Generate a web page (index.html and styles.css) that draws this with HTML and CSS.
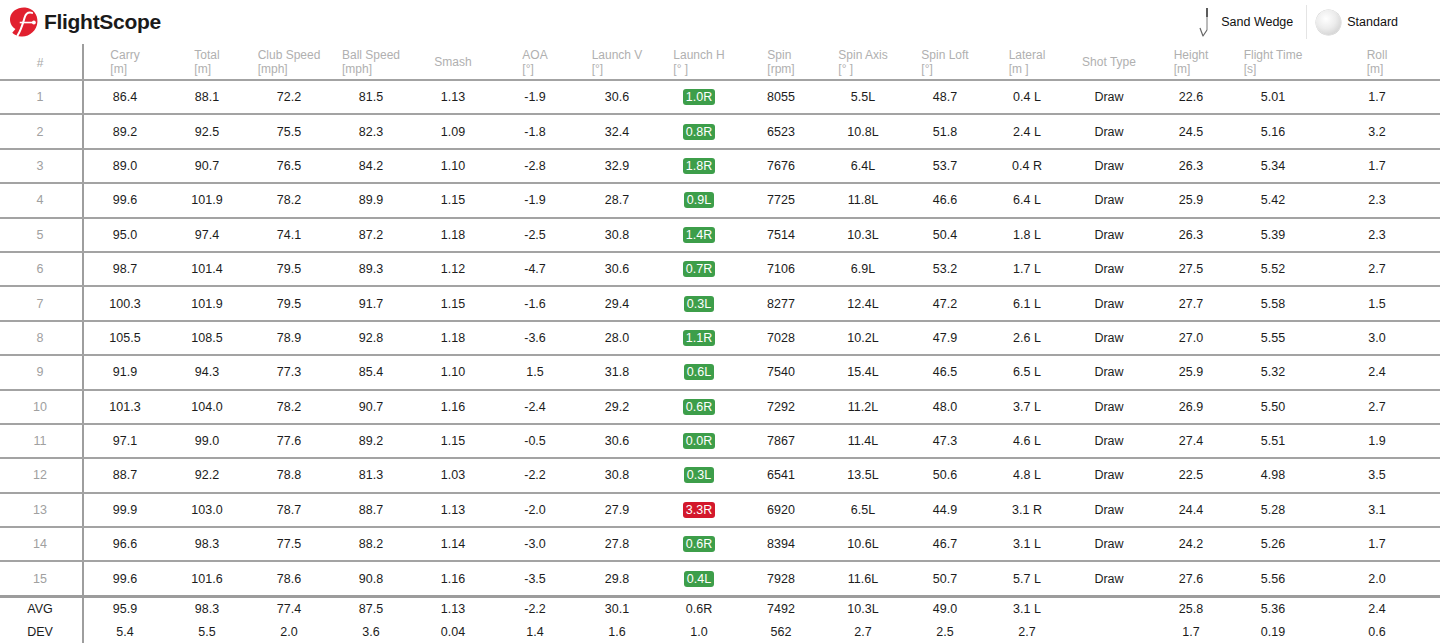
FILE: index.html
```html
<!DOCTYPE html>
<html lang="en">
<head>
<meta charset="utf-8">
<title>FlightScope</title>
<link rel="stylesheet" href="styles.css">
</head>
<body>
<header class="topbar">
  <div class="brand">
    <svg class="logo" viewBox="2 1 27 28" width="29" height="30">
      <path d="M3 11 C4 5 10 1 17 1.5 C24 2 29 8 28.5 15 C28 23 21 29 13.5 28.5 C10 28.3 7 27 5 25 L8 21.5 C4 19 2.5 15 3 11 Z" fill="#e1202f"/>
      <path d="M10 27.5 C13.5 22 15 16 16.5 11 C17.7 7 20 5.5 23.5 6.5" fill="none" stroke="#fff" stroke-width="1.9" stroke-linecap="round"/>
      <path d="M12 15.5 L25 15.5" fill="none" stroke="#fff" stroke-width="1.5"/>
      <circle cx="25.2" cy="15.5" r="1.8" fill="#fff"/>
    </svg>
    <span class="brand-name">FlightScope</span>
  </div>
  <div class="settings">
    <div class="setting">
      <svg class="club" viewBox="0 0 14 30" width="14" height="30">
        <path d="M8 1 L8 10" stroke="#333" stroke-width="1.6" fill="none"/>
        <path d="M8 10 L8 23" stroke="#777" stroke-width="1" fill="none"/>
        <path d="M1 21 L4 29 L8 23" stroke="#666" stroke-width="1.2" fill="none" stroke-linejoin="round"/>
      </svg>
      <span>Sand Wedge</span>
    </div>
    <div class="divider"></div>
    <div class="setting">
      <span class="ball"></span>
      <span>Standard</span>
    </div>
  </div>
</header>

<main class="grid-table">
  <div class="row head">
    <div class="idx">#</div>
    <div class="hc"><span>Carry<br>[m]</span></div>
    <div class="hc"><span>Total<br>[m]</span></div>
    <div class="hc"><span>Club Speed<br>[mph]</span></div>
    <div class="hc"><span>Ball Speed<br>[mph]</span></div>
    <div class="hc"><span>Smash</span></div>
    <div class="hc"><span>AOA<br>[°]</span></div>
    <div class="hc"><span>Launch V<br>[°]</span></div>
    <div class="hc"><span>Launch H<br>[° ]</span></div>
    <div class="hc"><span>Spin<br>[rpm]</span></div>
    <div class="hc"><span>Spin Axis<br>[° ]</span></div>
    <div class="hc"><span>Spin Loft<br>[°]</span></div>
    <div class="hc"><span>Lateral<br>[m ]</span></div>
    <div class="hc"><span>Shot Type</span></div>
    <div class="hc"><span>Height<br>[m]</span></div>
    <div class="hc"><span>Flight Time<br>[s]</span></div>
    <div class="hc"><span>Roll<br>[m]</span></div>
  </div>

  <div class="row shot"><div class="idx">1</div><div>86.4</div><div>88.1</div><div>72.2</div><div>81.5</div><div>1.13</div><div>-1.9</div><div>30.6</div><div><span class="badge ok">1.0R</span></div><div>8055</div><div>5.5L</div><div>48.7</div><div>0.4 L</div><div>Draw</div><div>22.6</div><div>5.01</div><div>1.7</div></div>
  <div class="row shot"><div class="idx">2</div><div>89.2</div><div>92.5</div><div>75.5</div><div>82.3</div><div>1.09</div><div>-1.8</div><div>32.4</div><div><span class="badge ok">0.8R</span></div><div>6523</div><div>10.8L</div><div>51.8</div><div>2.4 L</div><div>Draw</div><div>24.5</div><div>5.16</div><div>3.2</div></div>
  <div class="row shot"><div class="idx">3</div><div>89.0</div><div>90.7</div><div>76.5</div><div>84.2</div><div>1.10</div><div>-2.8</div><div>32.9</div><div><span class="badge ok">1.8R</span></div><div>7676</div><div>6.4L</div><div>53.7</div><div>0.4 R</div><div>Draw</div><div>26.3</div><div>5.34</div><div>1.7</div></div>
  <div class="row shot"><div class="idx">4</div><div>99.6</div><div>101.9</div><div>78.2</div><div>89.9</div><div>1.15</div><div>-1.9</div><div>28.7</div><div><span class="badge ok">0.9L</span></div><div>7725</div><div>11.8L</div><div>46.6</div><div>6.4 L</div><div>Draw</div><div>25.9</div><div>5.42</div><div>2.3</div></div>
  <div class="row shot"><div class="idx">5</div><div>95.0</div><div>97.4</div><div>74.1</div><div>87.2</div><div>1.18</div><div>-2.5</div><div>30.8</div><div><span class="badge ok">1.4R</span></div><div>7514</div><div>10.3L</div><div>50.4</div><div>1.8 L</div><div>Draw</div><div>26.3</div><div>5.39</div><div>2.3</div></div>
  <div class="row shot"><div class="idx">6</div><div>98.7</div><div>101.4</div><div>79.5</div><div>89.3</div><div>1.12</div><div>-4.7</div><div>30.6</div><div><span class="badge ok">0.7R</span></div><div>7106</div><div>6.9L</div><div>53.2</div><div>1.7 L</div><div>Draw</div><div>27.5</div><div>5.52</div><div>2.7</div></div>
  <div class="row shot"><div class="idx">7</div><div>100.3</div><div>101.9</div><div>79.5</div><div>91.7</div><div>1.15</div><div>-1.6</div><div>29.4</div><div><span class="badge ok">0.3L</span></div><div>8277</div><div>12.4L</div><div>47.2</div><div>6.1 L</div><div>Draw</div><div>27.7</div><div>5.58</div><div>1.5</div></div>
  <div class="row shot"><div class="idx">8</div><div>105.5</div><div>108.5</div><div>78.9</div><div>92.8</div><div>1.18</div><div>-3.6</div><div>28.0</div><div><span class="badge ok">1.1R</span></div><div>7028</div><div>10.2L</div><div>47.9</div><div>2.6 L</div><div>Draw</div><div>27.0</div><div>5.55</div><div>3.0</div></div>
  <div class="row shot"><div class="idx">9</div><div>91.9</div><div>94.3</div><div>77.3</div><div>85.4</div><div>1.10</div><div>1.5</div><div>31.8</div><div><span class="badge ok">0.6L</span></div><div>7540</div><div>15.4L</div><div>46.5</div><div>6.5 L</div><div>Draw</div><div>25.9</div><div>5.32</div><div>2.4</div></div>
  <div class="row shot"><div class="idx">10</div><div>101.3</div><div>104.0</div><div>78.2</div><div>90.7</div><div>1.16</div><div>-2.4</div><div>29.2</div><div><span class="badge ok">0.6R</span></div><div>7292</div><div>11.2L</div><div>48.0</div><div>3.7 L</div><div>Draw</div><div>26.9</div><div>5.50</div><div>2.7</div></div>
  <div class="row shot"><div class="idx">11</div><div>97.1</div><div>99.0</div><div>77.6</div><div>89.2</div><div>1.15</div><div>-0.5</div><div>30.6</div><div><span class="badge ok">0.0R</span></div><div>7867</div><div>11.4L</div><div>47.3</div><div>4.6 L</div><div>Draw</div><div>27.4</div><div>5.51</div><div>1.9</div></div>
  <div class="row shot"><div class="idx">12</div><div>88.7</div><div>92.2</div><div>78.8</div><div>81.3</div><div>1.03</div><div>-2.2</div><div>30.8</div><div><span class="badge ok">0.3L</span></div><div>6541</div><div>13.5L</div><div>50.6</div><div>4.8 L</div><div>Draw</div><div>22.5</div><div>4.98</div><div>3.5</div></div>
  <div class="row shot"><div class="idx">13</div><div>99.9</div><div>103.0</div><div>78.7</div><div>88.7</div><div>1.13</div><div>-2.0</div><div>27.9</div><div><span class="badge bad">3.3R</span></div><div>6920</div><div>6.5L</div><div>44.9</div><div>3.1 R</div><div>Draw</div><div>24.4</div><div>5.28</div><div>3.1</div></div>
  <div class="row shot"><div class="idx">14</div><div>96.6</div><div>98.3</div><div>77.5</div><div>88.2</div><div>1.14</div><div>-3.0</div><div>27.8</div><div><span class="badge ok">0.6R</span></div><div>8394</div><div>10.6L</div><div>46.7</div><div>3.1 L</div><div>Draw</div><div>24.2</div><div>5.26</div><div>1.7</div></div>
  <div class="row shot last"><div class="idx">15</div><div>99.6</div><div>101.6</div><div>78.6</div><div>90.8</div><div>1.16</div><div>-3.5</div><div>29.8</div><div><span class="badge ok">0.4L</span></div><div>7928</div><div>11.6L</div><div>50.7</div><div>5.7 L</div><div>Draw</div><div>27.6</div><div>5.56</div><div>2.0</div></div>

  <div class="row stat"><div class="idx">AVG</div><div>95.9</div><div>98.3</div><div>77.4</div><div>87.5</div><div>1.13</div><div>-2.2</div><div>30.1</div><div>0.6R</div><div>7492</div><div>10.3L</div><div>49.0</div><div>3.1 L</div><div></div><div>25.8</div><div>5.36</div><div>2.4</div></div>
  <div class="row stat"><div class="idx">DEV</div><div>5.4</div><div>5.5</div><div>2.0</div><div>3.6</div><div>0.04</div><div>1.4</div><div>1.6</div><div>1.0</div><div>562</div><div>2.7</div><div>2.5</div><div>2.7</div><div></div><div>1.7</div><div>0.19</div><div>0.6</div></div>
</main>
</body>
</html>
```

FILE: styles.css
```css
* { box-sizing: border-box; }

html, body {
  margin: 0;
  padding: 0;
  background: #fff;
}

body {
  font-family: "Liberation Sans", Arial, Helvetica, sans-serif;
  color: #1c1c1c;
  width: 1440px;
  height: 643px;
  overflow: hidden;
}

/* ---------- top bar ---------- */
.topbar {
  height: 44px;
  display: flex;
  align-items: center;
  justify-content: space-between;
  padding: 0 42px 0 9px;
}

.brand {
  display: flex;
  align-items: center;
  gap: 6px;
  margin-top: -1px;
}

.logo { display: block; }

.brand-name {
  font-size: 21px;
  font-weight: 700;
  letter-spacing: -0.3px;
  color: #1a1a1a;
}

.settings {
  display: flex;
  align-items: center;
  height: 44px;
}

.setting {
  display: flex;
  align-items: center;
  font-size: 12.5px;
  color: #111;
}

.club {
  display: block;
  margin-right: 8px;
}

.divider {
  width: 1px;
  height: 34px;
  background: #e4e4e4;
  margin: 0 9px 0 13px;
}

.ball {
  width: 25px;
  height: 25px;
  border-radius: 50%;
  background: radial-gradient(circle at 40% 35%, #ffffff 0%, #ececec 45%, #c4c4c4 100%);
  box-shadow: 0 0 0 0.5px #cfcfcf;
  margin-right: 6px;
}

/* ---------- table ---------- */
.grid-table {
  display: flex;
  flex-direction: column;
}

.row {
  display: grid;
  grid-template-columns: 84px repeat(15, 82px) 1fr;
  align-items: stretch;
}

.row > div {
  display: flex;
  align-items: center;
  justify-content: center;
  font-size: 12.5px;
}

.row > .idx {
  border-right: 2px solid #9e9e9e;
  padding-right: 2px;
}

.head {
  height: 37px;
  border-bottom: 2px solid #a3a3a3;
  color: #b0b0b0;
}

.head > div { font-size: 12px; }

.head .hc span {
  display: inline-block;
  text-align: left;
  line-height: 14px;
}

.head .idx { color: #a8a8a8; padding-top: 2px; }

.shot {
  height: 34.4px;
  border-bottom: 2px solid #a3a3a3;
  color: #1c1c1c;
}

.shot.last {
  height: 35.4px;
  border-bottom: 3px solid #9c9c9c;
}

.shot .idx { color: #a0a0a0; }

.stat {
  height: 23px;
  color: #1c1c1c;
}

.stat .idx { color: #1c1c1c; }

.badge {
  display: inline-block;
  color: #fff;
  line-height: 14px;
  padding: 1px 3px;
  border-radius: 3px;
  font-size: 12.5px;
}

.badge.ok { background: #3d9e4a; }
.badge.bad { background: #d3182c; }
```
